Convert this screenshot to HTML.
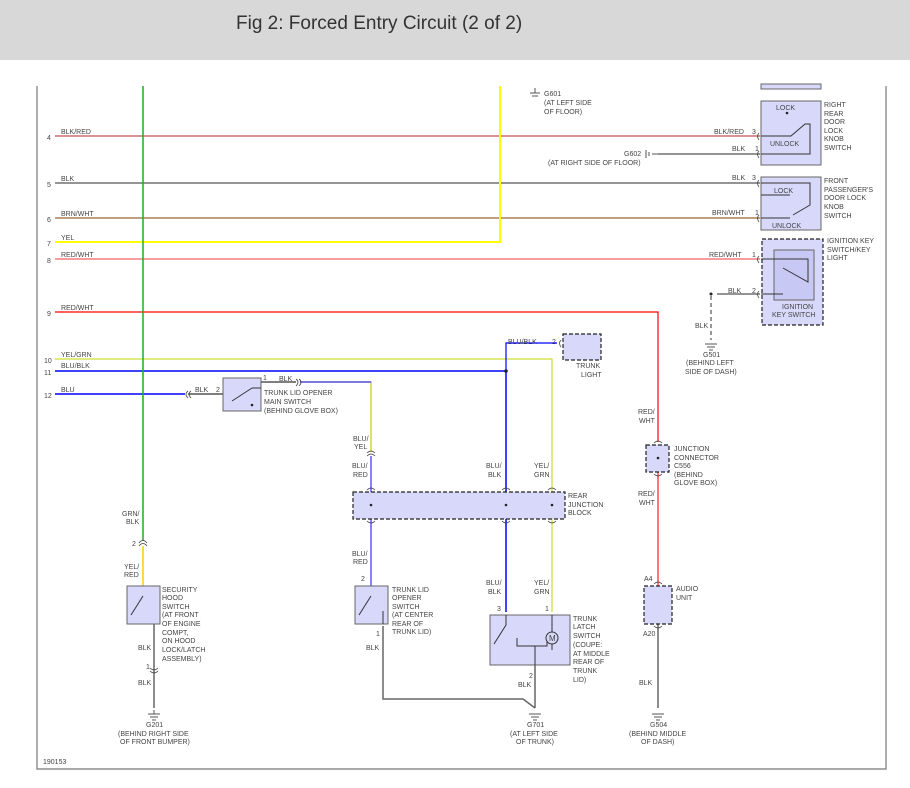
<!DOCTYPE html>
<html><head><meta charset="utf-8"><style>
html,body{margin:0;padding:0;background:#fff;}
.hdr{position:absolute;left:0;top:0;width:910px;height:60px;background:#d8d8d8;}
.hdr span{position:absolute;left:236px;top:13px;font:19px "Liberation Sans",sans-serif;color:#333;}
svg{position:absolute;left:0;top:0;}
text{font-family:"Liberation Sans",sans-serif;font-size:7px;fill:#444;}
</style></head><body>
<div class="hdr"><span>Fig 2: Forced Entry Circuit (2 of 2)</span></div>
<svg width="910" height="788" viewBox="0 0 910 788">
<g fill="none">
<!-- frame -->
<path d="M37 86V769H886V86" stroke="#777" stroke-width="1.2"/>
<!-- wires -->
<path d="M55 136H760" stroke="#c05050" stroke-width="1.2"/>
<path d="M55 183H760" stroke="#555" stroke-width="1.2"/>
<path d="M55 218H760" stroke="#996633" stroke-width="1.2"/>
<path d="M55 242H500V86" stroke="#ffff00" stroke-width="2"/>
<path d="M55 259H760" stroke="#f06060" stroke-width="1.2"/>
<path d="M55 312H658V442" stroke="#ff0000" stroke-width="1.2"/>
<path d="M658 472V586" stroke="#ff7777" stroke-width="2"/>
<path d="M55 359H552V612" stroke="#ccdd33" stroke-width="1.2"/>
<path d="M55 371H506V612" stroke="#0000ff" stroke-width="1.5"/>
<path d="M506 371V343H557" stroke="#0000ff" stroke-width="1.2"/>
<path d="M55 394H185" stroke="#0000ff" stroke-width="1.5"/>
<path d="M188 394H223" stroke="#333" stroke-width="1.2"/>
<path d="M261 382H296" stroke="#333" stroke-width="1.2"/>
<path d="M300 382H371V452" stroke="#cccc00" stroke-width="1.2"/>
<path d="M300 382H371" stroke="#0000ff" stroke-width="1"/>
<path d="M371 456V586" stroke="#6655ff" stroke-width="1.5"/>
<path d="M143 86V541" stroke="#22aa22" stroke-width="1.5"/>
<path d="M143 546V586" stroke="#ffcc00" stroke-width="1.5"/>
<path d="M154 624V708" stroke="#666" stroke-width="1.5"/>
<path d="M383 626V699H523L535 708" stroke="#666" stroke-width="1.5"/>
<path d="M535 665V708" stroke="#666" stroke-width="1.5"/>
<path d="M658 624V708" stroke="#666" stroke-width="1.5"/>
<path d="M658 154H760" stroke="#555" stroke-width="1.2"/>
<path d="M717 294H760" stroke="#555" stroke-width="1.2"/>
<path d="M711 296V340" stroke="#555" stroke-width="1.2" stroke-dasharray="4 3"/>
<!-- boxes -->
<g fill="#d8d8fb" stroke="#666" stroke-width="1">
<rect x="223" y="378" width="38" height="33"/>
<rect x="127" y="586" width="33" height="38"/>
<rect x="355" y="586" width="33" height="38"/>
<rect x="490" y="615" width="80" height="50"/>
<rect x="761" y="101" width="60" height="64"/>
<rect x="761" y="177" width="60" height="53"/>
<rect x="761" y="84" width="60" height="5"/>
</g>
<g fill="#d8d8fb" stroke="#222" stroke-width="1.2" stroke-dasharray="4 2">
<rect x="353" y="492" width="212" height="27"/>
<rect x="563" y="334" width="38" height="26"/>
<rect x="646" y="445" width="23" height="27"/>
<rect x="644" y="586" width="28" height="38"/>
<rect x="762" y="239" width="61" height="86"/>
</g>
<rect x="774" y="250" width="40" height="50" stroke="#666" fill="#c8c8f4"/>
<!-- switch internals -->
<g stroke="#333" stroke-width="1">
<path d="M232 401L252 388M252 388H261"/>
<path d="M143 596L131 615"/>
<path d="M371 596L359 615M383 611V624"/>
<path d="M506 615V625L494 644M517 638V646H547V638M535 646V665"/>
<circle cx="552" cy="638" r="6" fill="#d8d8fb"/>
<path d="M552 615V632M552 644V650"/>
<path d="M761 136H791L805 124H810V154H761"/>
<path d="M761 183H810V205L793 215M761 218H790M761 195H790"/>
<path d="M761 259H808V282L783 268M761 294H783"/>
</g>
<text x="549" y="641" style="font-size:8px">M</text>
<!-- dots -->
<g fill="#222">
<circle cx="506" cy="371" r="1.8"/><circle cx="330" cy="384" r="0"/>
<circle cx="371" cy="505" r="1.3"/><circle cx="506" cy="505" r="1.3"/><circle cx="552" cy="505" r="1.3"/>
<circle cx="658" cy="458" r="1.3"/><circle cx="711" cy="294" r="1.5"/>
<circle cx="787" cy="113" r="1.3"/><circle cx="252" cy="405" r="1.3"/>
</g>
<!-- connector arcs -->
<g stroke="#444" stroke-width="0.8">
<path d="M139 543Q143 538 147 543M139 546Q143 541 147 546"/>
<path d="M150 668Q154 672 158 668M150 671Q154 675 158 671"/>
<path d="M367 453Q371 449 375 453M367 456Q371 452 375 456"/>
<path d="M367 490Q371 486 375 490M367 521Q371 525 375 521"/>
<path d="M502 490Q506 486 510 490M502 521Q506 525 510 521"/>
<path d="M548 490Q552 486 556 490M548 521Q552 525 556 521"/>
<path d="M654 443Q658 439 662 443M654 474Q658 478 662 474"/>
<path d="M654 584Q658 580 662 584M654 626Q658 630 662 626"/>
<path d="M296 379Q300 382 296 386M299 379Q303 382 299 386"/>
<path d="M188 391Q184 394 188 398M191 391Q187 394 191 398"/>
<path d="M759 133Q756 136 759 140M759 151Q756 154 759 158M759 180Q756 183 759 187M759 215Q756 218 759 222M759 256Q756 259 759 263M759 291Q756 294 759 298M561 340Q558 343 561 347"/>
</g>
<!-- ground symbols -->
<g stroke="#555" stroke-width="1">
<path d="M148 714H160M150 717H158M152 720H156M154 710V714"/>
<path d="M529 714H541M531 717H539M533 720H537"/>
<path d="M652 714H664M654 717H662M656 720H660"/>
<path d="M705 344H717M707 347H715M709 350H713"/>
<path d="M530 93H540M532 96H538M535 88V93"/>
<path d="M646 150V158M649 152V156M652 154H658"/>
</g>
</g>
<!-- labels -->
<g>
<text x="47" y="140">4</text><text x="47" y="187">5</text><text x="47" y="222">6</text><text x="47" y="246">7</text><text x="47" y="263">8</text><text x="47" y="316">9</text><text x="44" y="363">10</text><text x="44" y="375">11</text><text x="44" y="398">12</text>
<text x="61" y="134">BLK/RED</text><text x="61" y="181">BLK</text><text x="61" y="216">BRN/WHT</text><text x="61" y="240">YEL</text><text x="61" y="257">RED/WHT</text><text x="61" y="310">RED/WHT</text><text x="61" y="357">YEL/GRN</text><text x="61" y="368">BLU/BLK</text><text x="61" y="392">BLU</text>
<text x="195" y="392">BLK</text><text x="216" y="392">2</text><text x="263" y="380">1</text><text x="279" y="381">BLK</text>
<text x="264" y="395">TRUNK LID OPENER</text><text x="264" y="404">MAIN SWITCH</text><text x="264" y="413">(BEHIND GLOVE BOX)</text>
<text x="544" y="96">G601</text><text x="544" y="105">(AT LEFT SIDE</text><text x="544" y="114">OF FLOOR)</text>
<text x="624" y="156">G602</text><text x="548" y="165">(AT RIGHT SIDE OF FLOOR)</text>
<text x="714" y="134">BLK/RED</text><text x="752" y="134">3</text><text x="732" y="151">BLK</text><text x="755" y="151">1</text>
<text x="776" y="110">LOCK</text><text x="770" y="146">UNLOCK</text>
<text x="824" y="107">RIGHT</text><text x="824" y="116">REAR</text><text x="824" y="124">DOOR</text><text x="824" y="133">LOCK</text><text x="824" y="141">KNOB</text><text x="824" y="150">SWITCH</text>
<text x="732" y="180">BLK</text><text x="752" y="180">3</text><text x="712" y="215">BRN/WHT</text><text x="755" y="215">1</text>
<text x="774" y="193">LOCK</text><text x="772" y="228">UNLOCK</text>
<text x="824" y="183">FRONT</text><text x="824" y="192">PASSENGER'S</text><text x="824" y="200">DOOR LOCK</text><text x="824" y="209">KNOB</text><text x="824" y="218">SWITCH</text>
<text x="709" y="257">RED/WHT</text><text x="752" y="257">1</text><text x="728" y="293">BLK</text><text x="752" y="293">2</text>
<text x="782" y="309">IGNITION</text><text x="772" y="317">KEY SWITCH</text>
<text x="827" y="243">IGNITION KEY</text><text x="827" y="252">SWITCH/KEY</text><text x="827" y="260">LIGHT</text>
<text x="695" y="328">BLK</text><text x="703" y="357">G501</text><text x="686" y="365">(BEHIND LEFT</text><text x="685" y="374">SIDE OF DASH)</text>
<text x="508" y="344">BLU/BLK</text><text x="552" y="344">2</text><text x="576" y="368">TRUNK</text><text x="581" y="377">LIGHT</text>
<text x="638" y="414">RED/</text><text x="639" y="423">WHT</text>
<text x="674" y="451">JUNCTION</text><text x="674" y="460">CONNECTOR</text><text x="674" y="468">C556</text><text x="674" y="477">(BEHIND</text><text x="674" y="485">GLOVE BOX)</text>
<text x="638" y="496">RED/</text><text x="639" y="505">WHT</text>
<text x="644" y="581">A4</text><text x="676" y="591">AUDIO</text><text x="676" y="600">UNIT</text><text x="643" y="636">A20</text>
<text x="639" y="685">BLK</text><text x="650" y="727">G504</text><text x="629" y="736">(BEHIND MIDDLE</text><text x="641" y="744">OF DASH)</text>
<text x="353" y="441">BLU/</text><text x="354" y="440" dy="9">YEL</text><text x="352" y="468">BLU/</text><text x="353" y="477">RED</text>
<text x="352" y="556">BLU/</text><text x="353" y="564">RED</text><text x="361" y="581">2</text><text x="376" y="636">1</text><text x="366" y="650">BLK</text>
<text x="392" y="592">TRUNK LID</text><text x="392" y="600">OPENER</text><text x="392" y="609">SWITCH</text><text x="392" y="617">(AT CENTER</text><text x="392" y="626">REAR OF</text><text x="392" y="634">TRUNK LID)</text>
<text x="486" y="468">BLU/</text><text x="488" y="477">BLK</text><text x="534" y="468">YEL/</text><text x="534" y="477">GRN</text>
<text x="568" y="498">REAR</text><text x="568" y="507">JUNCTION</text><text x="568" y="515">BLOCK</text>
<text x="486" y="585">BLU/</text><text x="488" y="594">BLK</text><text x="534" y="585">YEL/</text><text x="534" y="594">GRN</text>
<text x="497" y="611">3</text><text x="545" y="611">1</text><text x="529" y="678">2</text><text x="518" y="687">BLK</text>
<text x="573" y="621">TRUNK</text><text x="573" y="629">LATCH</text><text x="573" y="638">SWITCH</text><text x="573" y="647">(COUPE:</text><text x="573" y="656">AT MIDDLE</text><text x="573" y="664">REAR OF</text><text x="573" y="673">TRUNK</text><text x="573" y="682">LID)</text>
<text x="527" y="727">G701</text><text x="510" y="736">(AT LEFT SIDE</text><text x="516" y="744">OF TRUNK)</text>
<text x="122" y="516">GRN/</text><text x="126" y="524">BLK</text><text x="132" y="546">2</text><text x="124" y="569">YEL/</text><text x="124" y="577">RED</text>
<text x="162" y="592">SECURITY</text><text x="162" y="600">HOOD</text><text x="162" y="609">SWITCH</text><text x="162" y="617">(AT FRONT</text><text x="162" y="626">OF ENGINE</text><text x="162" y="635">COMPT,</text><text x="162" y="643">ON HOOD</text><text x="162" y="652">LOCK/LATCH</text><text x="162" y="661">ASSEMBLY)</text>
<text x="138" y="650">BLK</text><text x="146" y="669">1</text><text x="138" y="685">BLK</text>
<text x="146" y="727">G201</text><text x="118" y="736">(BEHIND RIGHT SIDE</text><text x="120" y="744">OF FRONT BUMPER)</text>
<text x="43" y="764">190153</text>
</g>
</svg>
</body></html>
